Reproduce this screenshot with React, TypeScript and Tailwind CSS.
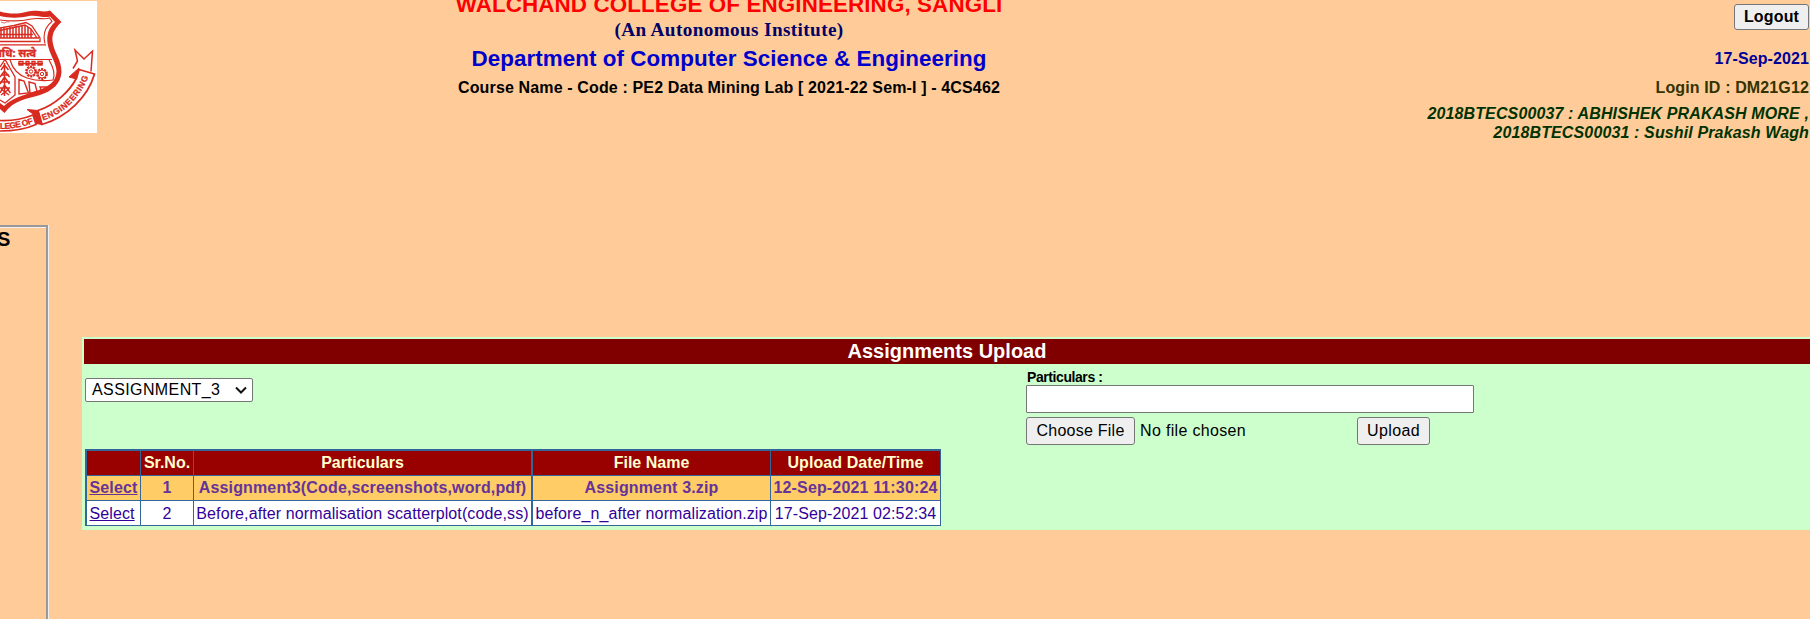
const uploads = [
  { no: "1", part: "Assignment3(Code,screenshots,word,pdf)", file: "Assignment 3.zip", at: "12-Sep-2021 11:30:24", active: true },
  { no: "2", part: "Before,after normalisation scatterplot(code,ss)", file: "before_n_after normalization.zip", at: "17-Sep-2021 02:52:34", active: false },
];

function Crest() {
  return (
    <svg width="97" height="132" viewBox="0 1 97 132" className="block bg-white" fill="none" stroke="#d92a20">
      <path d="M0 11.500 C10 14.500 20 14 28 11.500 C37 9.500 43 13 50 10.500 L61.500 22 C54 29 51 35 53 44 C55 54 61.500 60 61.500 72 C61 83 53 91 40 95 C26 99 14 100 4.500 113 L0 109 V103 L4 106 C12 98 23 95.500 35 91.500 C48 87 56.500 82 56.500 71 C56 62 49 54 47.500 43 C46.500 34 49 27 55 22 L50 16.500 C44 18.500 37 14.500 29 16 C20 18 10 18.500 0 16z" fill="#d92a20" stroke="none" />
      <path d="M0 20 C12 21.500 23 21 31 19 C39 17.500 45 20 49.500 18 L52 21.500 C45 27 42.500 34 45 43.500" strokeWidth="1.100" />
      <path d="M1 22 q2 1 3.500 1 q2 -2 5 -1" strokeWidth="0.700" />
      <path d="M0 28 L14 25.500 L26 22.500 L32 26 L40 38 V41.500 H0 M0 30.500 L25 25 L31 29 L37 38 M0 38 H39" strokeWidth="1.300" />
      <path d="M1 28v10M4 28v10M7 28v10M10 27v11M13 27v11M16 26v12M19 26v12M22 25v13M25 25v13M28 27v11M31 29v9M0 34.500h33" strokeWidth="1.500" />
      <path d="M0 44.800 H46 M0 59.500 H52" strokeWidth="1.200" />
      <text x="-5" y="56.500" fontSize="10.500" fontWeight="700" fill="#d92a20" strokeWidth=".3" fontFamily="Noto Sans, sans-serif" textLength="41" lengthAdjust="spacingAndGlyphs">षधि: सत्वे</text>
      <path d="M10 60 C13 70 18 75 27 78 C36 81 45 81 53 80 C56 73 52 65 49 60" strokeWidth="1.200" />
      <path d="M19 61.500h4v3.500h-4zM26 61.500h3v3.500h-3zM32 61.500h3v3.500h-3zM38 61.500h4v3.500h-4zM18 63.500h25" strokeWidth="1.300" />
      <circle cx="31" cy="71.500" r="5" strokeWidth="1.800" strokeDasharray="2.200 .94" />
      <circle cx="31" cy="71.500" r="4" />
      <circle cx="31" cy="71.500" r="1.700" />
      <circle cx="42" cy="74" r="5" strokeWidth="1.800" strokeDasharray="2.200 .94" />
      <circle cx="42" cy="74" r="4" />
      <circle cx="42" cy="74" r="1.700" />
      <path d="M0 67 L5 59.500 L15 77 V95 L5 103 L0 100" strokeWidth="1.300" />
      <path d="M4.500 63V96M1 70l3.500-5 4 5M0 77l4.500-6 5 6M0 84l4.500-7 5 7M0 93l4.500-8 6 8M1 75h8M0 82h10M0 88h10M1 95l8-6M9 95l-8-6" strokeWidth="1.500" />
      <path d="M19 79.500l5 1.500l4.500 12l-9.500 1zM29 82l6 1.500l2 8l-7 2zM40 87h8.500l-3 2.500l-4 1.500z" strokeWidth="1.400" />
      <path d="M73 68.500 L77.500 61 L75 50 L84 59 L92.500 51 L91 71.500" strokeWidth="1.500" />
      <path d="M79 69.500 L94.500 74 C88 97 67 117 42 124.500 L38 110.500 C55 105 70 91 76.500 78z" strokeWidth="1.800" />
      <path d="M69 77 L79 68 L76.500 79z" fill="#d92a20" />
      <path d="M27 109.500 L38 110.500 L42 124.500 L36 123.500 L33 114z" fill="#d92a20" />
      <path d="M0 120.500 C12 121 23 119 33 115 L36 124.500 C26 129 12 131 0 131" strokeWidth="1.600" />
      <path id="crest-a" d="M0 129 C12 129 24 127 36 122.500" stroke="none" />
      <path id="crest-b" d="M43 120.500 C63 114.500 81 98 89.500 74" stroke="none" />
      <g fill="#d92a20" strokeWidth=".25" fontFamily="Liberation Sans, sans-serif" fontWeight="700" fontSize="8.500">
        <text><textPath href="#crest-a" textLength="34">LEGE OF</textPath></text>
        <text><textPath href="#crest-b" textLength="65">ENGINEERING</textPath></text>
      </g>
    </svg>
  );
}

const cell = "border-[#336699] border-b text-center whitespace-nowrap";
const columns = "grid h-[25px] grid-rows-[25px] grid-cols-[54px_53px_339px_238px_170px]";

export default function App() {
  return (
    <div className="h-[619px] w-[1810px] overflow-hidden bg-[#ffcc99] text-base text-black [font-family:'Liberation_Sans',Arial,sans-serif]">
      <header className="flex h-[225px] items-start">
        <div className="w-[97px] pt-px"><Crest /></div>
        <div className="flex h-[105px] w-[1264px] flex-col items-center whitespace-nowrap font-bold">
          <h1 className="-mt-[7px] h-6 text-[22.4px] leading-6 tracking-[0.11px] text-[#ff0000]">WALCHAND COLLEGE OF ENGINEERING, SANGLI</h1>
          <p className="mt-[3px] h-5 text-[19.2px] leading-5 tracking-[0.38px] text-[#000066] [font-family:'Liberation_Serif',serif]">(An Autonomous Institute)</p>
          <h2 className="mt-[5px] h-7 text-[22.4px] leading-7 tracking-[0.05px] text-[#0000cc]">Department of Computer Science &amp; Engineering</h2>
          <p className="mt-[3px] h-6 leading-6 tracking-[0.14px]">Course Name - Code : PE2 Data Mining Lab [ 2021-22 Sem-I ] - 4CS462</p>
        </div>
        <div className="flex flex-1 flex-col items-end whitespace-nowrap pr-px pt-1 font-bold">
          <button className="h-[26px] w-[75px] rounded-[3px] border border-[#767676] bg-[#efefef] leading-6 tracking-[0.15px]">Logout</button>
          <p className="mt-[19px] h-5 leading-5 tracking-[0.1px] text-[#000099]">17-Sep-2021</p>
          <p className="mt-[9px] h-5 leading-5 tracking-[0.13px] text-[#333300]">Login ID : DM21G12</p>
          <p className="mt-[6px] text-right italic leading-[19px] tracking-[0.13px] text-[#003300]">2018BTECS00037 : ABHISHEK PRAKASH MORE ,<br />2018BTECS00031 : Sushil Prakash Wagh</p>
        </div>
      </header>
      <main className="flex h-[394px]">
        <aside className="w-[49px] border-r border-[#f0f0f0]">
          <div className="h-full w-12 border-r-2 border-t-2 border-[#999999]">
            <div className="h-full border-t border-[#f0f0f0]">
              <span className="-ml-[3px] block text-[20px] font-bold leading-[22px]">S</span>
            </div>
          </div>
        </aside>
        <section className="ml-[33px] mt-[112px] h-[193px] flex-1 bg-[#ccffcc] pl-0.5 pt-0.5">
          <h3 className="h-[25px] bg-[#800000] text-center text-[20px] font-bold leading-6 text-white">Assignments Upload</h3>
          <div className="flex h-[85px]">
            <div className="w-[942px] pl-px pt-[14px]">
              <button className="flex h-6 w-[168px] items-center justify-between rounded-[2px] border border-[#767676] bg-white pl-1.5 pr-[5px]">
                <span className="tracking-[0.4px]">ASSIGNMENT_3</span>
                <svg width="12" height="8" viewBox="0 0 12 8" fill="none" stroke="#111" strokeWidth="2"><path d="M1 1.500l5 5 5-5" /></svg>
              </button>
            </div>
            <div className="pt-1">
              <label className="block h-[17px] pl-px text-[14px] font-bold leading-[19px] tracking-[-0.42px]">Particulars :</label>
              <input className="block h-7 w-[448px] rounded-[1px] border border-[#767676] bg-white" />
              <div className="mt-1 flex h-7 items-center">
                <button className="h-7 w-[109px] whitespace-nowrap rounded-[3px] border border-[#767676] bg-[#efefef] tracking-[0.25px]">Choose File</button>
                <span className="w-[222px] pl-[5px] tracking-[0.33px]">No file chosen</span>
                <button className="h-7 w-[73px] rounded-[3px] border border-[#767676] bg-[#efefef] tracking-[0.35px]">Upload</button>
              </div>
            </div>
          </div>
          <div className="ml-px w-[856px] border-l-2 border-t-2 border-[#336699]">
            <div className={`${columns} bg-[#990000] font-bold leading-6 text-[#ffffcc]`}>
              <span className={`${cell} border-r`} />
              <span className={`${cell} border-r`}>Sr.No.</span>
              <span className={`${cell} border-r-2`}>Particulars</span>
              <span className={`${cell} border-r`}>File Name</span>
              <span className={`${cell} border-r tracking-[0.08px]`}>Upload Date/Time</span>
            </div>
            {uploads.map((r) => (
              <div key={r.no} className={`${columns} ${r.active ? "bg-[#ffcc66] font-bold leading-6 tracking-[0.15px] text-[#663399]" : "bg-white leading-[26px] tracking-[0.11px] text-[#330099]"}`}>
                <span className="border-b border-r border-[#336699] pl-[2.5px]"><a className="underline">Select</a></span>
                <span className={`${cell} border-r`}>{r.no}</span>
                <span className={`${cell} border-r-2`}>{r.part}</span>
                <span className={`${cell} border-r`}>{r.file}</span>
                <span className={`${cell} border-r`}>{r.at}</span>
              </div>
            ))}
          </div>
        </section>
      </main>
    </div>
  );
}
